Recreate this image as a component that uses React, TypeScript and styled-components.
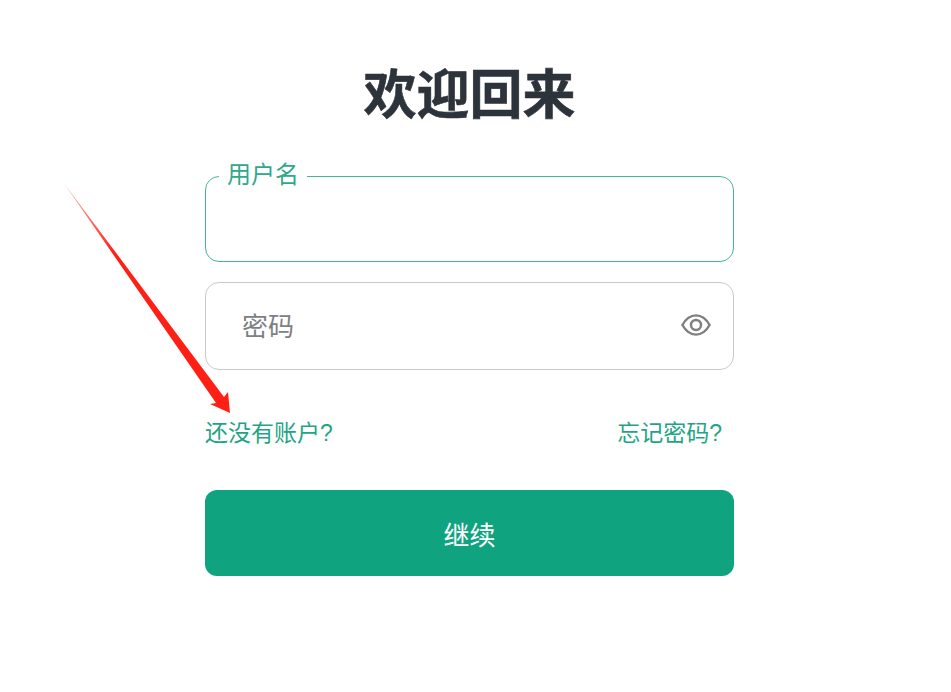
import styled, { createGlobalStyle } from 'styled-components';

const GlobalStyle = createGlobalStyle`
  html, body {
    margin: 0;
    padding: 0;
    background: #fff;
  }
  body {
    font-family: "Liberation Sans", "Noto Sans CJK SC", sans-serif;
  }
`;

const App = () => {
  return (
    <>
      <GlobalStyle />
      <StyledPage>
        <StyledForm>
          <StyledTitle>欢迎回来</StyledTitle>
          <StyledActiveField>
            <StyledLegend>用户名</StyledLegend>
          </StyledActiveField>
          <StyledPasswordField>
            <StyledPlaceholder>密码</StyledPlaceholder>
            <StyledEye viewBox="0 0 30 24" fill="none" stroke="#7f7f7f" strokeWidth="2.4">
              <path d="M1.4 12C5 5.6 9.5 2.4 15 2.4S25 5.6 28.6 12C25 18.4 20.5 21.6 15 21.6S5 18.4 1.4 12Z" />
              <circle cx="15" cy="12" r="5" />
            </StyledEye>
          </StyledPasswordField>
          <StyledLinks>
            <StyledLink>还没有账户?</StyledLink>
            <StyledLink>忘记密码?</StyledLink>
          </StyledLinks>
          <StyledButton type="button">继续</StyledButton>
        </StyledForm>
        <StyledArrow viewBox="0 0 951 692">
          <defs>
            <linearGradient id="arrowFade" gradientUnits="userSpaceOnUse" x1="63" y1="182" x2="115" y2="252">
              <stop offset="0" stopColor="#ff2015" stopOpacity="0.25" />
              <stop offset="1" stopColor="#ff2015" />
            </linearGradient>
          </defs>
          <polygon
            points="63,182 224,397 228,392 230,413 210,404 216,403"
            fill="url(#arrowFade)"
          />
        </StyledArrow>
      </StyledPage>
    </>
  );
};

export default App;

const StyledPage = styled.div`
  position: relative;
  width: 951px;
  height: 692px;
  overflow: hidden;
  display: flex;
  justify-content: center;
  padding: 60px 12px 0 0;
  box-sizing: border-box;
  background: #fff;
`;

const StyledForm = styled.form`
  width: 529px;
  display: flex;
  flex-direction: column;
`;

const StyledTitle = styled.h1`
  margin: 0 0 34px;
  height: 68px;
  line-height: 72px;
  font-size: 53px;
  font-weight: 700;
  text-align: center;
  color: #2d333a;
  -webkit-text-stroke: 0.6px #2d333a;
`;

const StyledActiveField = styled.fieldset`
  box-sizing: border-box;
  height: 100px;
  margin: 0 0 20px;
  padding: 0 0 0 13px;
  border: 1px solid #45b596;
  border-radius: 14px;
`;

const StyledLegend = styled.legend`
  padding: 0 8px 2px;
  font-size: 24px;
  line-height: 26px;
  color: #2fa98a;
`;

const StyledPasswordField = styled.div`
  box-sizing: border-box;
  height: 88px;
  padding: 0 22px 0 36px;
  display: flex;
  align-items: center;
  justify-content: space-between;
  border: 1px solid #c9c9cd;
  border-radius: 14px;
`;

const StyledPlaceholder = styled.span`
  padding-bottom: 4px;
  font-size: 26px;
  color: #7c7f84;
`;

const StyledEye = styled.svg`
  width: 30px;
  height: 24px;
  margin-top: -2px;
`;

const StyledLinks = styled.div`
  display: flex;
  justify-content: space-between;
  margin-top: 48px;
  height: 30px;
  padding-right: 12px;
`;

const StyledLink = styled.a`
  font-size: 23px;
  line-height: 30px;
  color: #1fa585;
`;

const StyledButton = styled.button`
  margin-top: 42px;
  height: 86px;
  border: 0;
  border-radius: 12px;
  background: #10a37f;
  color: #fff;
  font-family: inherit;
  font-size: 26px;
`;

const StyledArrow = styled.svg`
  position: absolute;
  top: 0;
  left: 0;
  width: 951px;
  height: 692px;
  pointer-events: none;
`;
